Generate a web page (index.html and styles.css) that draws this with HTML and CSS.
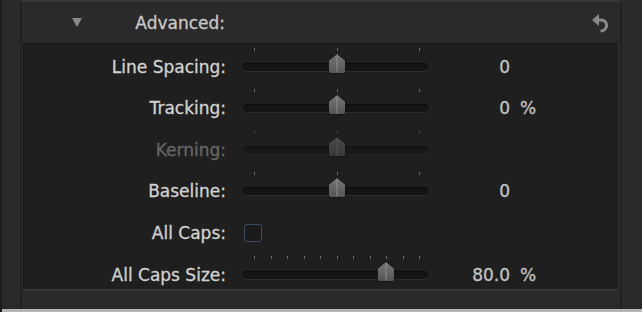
FILE: index.html
```html
<!DOCTYPE html>
<html lang="en">
<head>
    <meta charset="UTF-8">
    <title>Advanced</title>
    <link rel="stylesheet" href="styles.css">
</head>
<body>
    <svg class="defs" width="0" height="0">
        <defs>
            <linearGradient id="thumb-fill" x1="0" y1="0" x2="0" y2="1">
                <stop offset="0" stop-color="#777"/>
                <stop offset="1" stop-color="#545454"/>
            </linearGradient>
            <linearGradient id="thumb-off" x1="0" y1="0" x2="0" y2="1">
                <stop offset="0" stop-color="#4a4a4a"/>
                <stop offset="1" stop-color="#383838"/>
            </linearGradient>
            <symbol id="thumb" viewBox="0 0 18 21">
                <path d="M9 0.5 L17.5 7.5 V18.5 Q17.5 20.5 15.5 20.5 H2.5 Q0.5 20.5 0.5 18.5 V7.5 Z" fill="var(--fill)" stroke="#151515"/>
                <line x1="9" y1="2.5" x2="9" y2="19.5" stroke="var(--mid)" stroke-width="1"/>
            </symbol>
        </defs>
    </svg>

    <div class="panel">
        <div class="header">
            <div class="head-title">
                <span class="disclosure"></span>
                <span>Advanced:</span>
            </div>
            <svg class="reset" width="16" height="19" viewBox="0 0 16 19">
                <polygon points="0,6 7,0 7,12" fill="#8a8a8a"/>
                <path d="M6 6 H9 C12.5 6 14.5 8.5 14.5 11.5 C14.5 14.8 12 17 8.5 17" fill="none" stroke="#8a8a8a" stroke-width="3"/>
            </svg>
        </div>

        <div class="params">
            <div class="row">
                <label>Line Spacing:</label>
                <div class="slider">
                    <div class="ticks"><i></i><i></i><i></i></div>
                    <div class="track"></div>
                    <svg class="thumb" style="--pos:0.5"><use href="#thumb"/></svg>
                </div>
                <span class="value">0</span>
                <span class="unit"></span>
            </div>

            <div class="row">
                <label>Tracking:</label>
                <div class="slider">
                    <div class="ticks"><i></i><i></i><i></i></div>
                    <div class="track"></div>
                    <svg class="thumb" style="--pos:0.5"><use href="#thumb"/></svg>
                </div>
                <span class="value">0</span>
                <span class="unit">%</span>
            </div>

            <div class="row disabled">
                <label>Kerning:</label>
                <div class="slider">
                    <div class="ticks"><i></i><i></i><i></i></div>
                    <div class="track"></div>
                    <svg class="thumb" style="--pos:0.5"><use href="#thumb"/></svg>
                </div>
                <span class="value"></span>
                <span class="unit"></span>
            </div>

            <div class="row">
                <label>Baseline:</label>
                <div class="slider">
                    <div class="ticks"><i></i><i></i><i></i></div>
                    <div class="track"></div>
                    <svg class="thumb" style="--pos:0.5"><use href="#thumb"/></svg>
                </div>
                <span class="value">0</span>
                <span class="unit"></span>
            </div>

            <div class="row">
                <label>All Caps:</label>
                <div class="check-cell"><span class="checkbox"></span></div>
                <span class="value"></span>
                <span class="unit"></span>
            </div>

            <div class="row">
                <label>All Caps Size:</label>
                <div class="slider">
                    <div class="ticks"><i></i><i></i><i></i><i></i><i></i><i></i><i></i><i></i><i></i><i></i><i></i></div>
                    <div class="track"></div>
                    <svg class="thumb" style="--pos:0.8"><use href="#thumb"/></svg>
                </div>
                <span class="value">80.0</span>
                <span class="unit">%</span>
            </div>
        </div>
    </div>
    <div class="bottom-edge"></div>
</body>
</html>
```

FILE: styles.css
```css
body {
    margin: 0;
    height: 312px;
    overflow: hidden;
    background: #2a2a2a;
    border-left: 2px solid #1c1c1c;
    font-family: "DejaVu Sans", sans-serif;
    font-size: 17px;
    color: #d2d2d2;
    -webkit-text-stroke: 0.3px currentColor;
    display: flex;
    flex-direction: column;
}
.defs {
    position: absolute;
}
.panel {
    margin-left: 18px;
    width: 598px;
    height: 309px;
    border-left: 2px solid #222;
    border-right: 2px solid #222;
    border-top: 2px solid #353535;
    box-sizing: content-box;
    background: #2a2a2a;
}
.header {
    height: 41px;
    display: flex;
    align-items: center;
    padding-right: 12px;
}
.head-title {
    width: 153px;
    padding-left: 50px;
    display: flex;
    align-items: center;
    justify-content: space-between;
    color: #c8c8c8;
}
.disclosure {
    width: 0;
    height: 0;
    border-left: 5px solid transparent;
    border-right: 5px solid transparent;
    border-top: 9px solid #8a8a8a;
}
.reset {
    margin-left: auto;
    margin-top: 1px;
}
.params {
    margin-left: 1px;
    background: #1f1f1f;
    border-top: 1px solid #171717;
    border-left: 1px solid #161616;
    border-right: 1px solid #303030;
    border-bottom: 2px solid #383838;
    border-radius: 0 0 4px 4px;
    padding-top: 8.7px;
    display: flex;
    flex-direction: column;
    gap: 13.6px;
    width: 594px;
}
.row {
    height: 28px;
    display: grid;
    grid-template-columns: 219px 185px 82px auto;
    align-items: center;
}
.row label {
    text-align: right;
    padding-right: 17px;
}
.slider {
    position: relative;
    height: 28px;
}
.track {
    position: absolute;
    left: 0;
    right: 0;
    top: 10px;
    height: 8px;
    border-radius: 4px;
    background: #151515;
    box-shadow: inset 0 1px 1px #0b0b0b, 0 1px 0 #2b2b2b;
}
.ticks {
    position: absolute;
    left: 11px;
    width: 166px;
    top: -5px;
    height: 3px;
    display: flex;
    justify-content: space-between;
}
.ticks i {
    width: 1px;
    height: 3px;
    background: #6a6a6a;
}
.thumb {
    --fill: url(#thumb-fill);
    --mid: #8e8e8e;
    position: absolute;
    top: 0;
    left: calc(2px + var(--pos) * 165px);
    width: 18px;
    height: 21px;
}
.value {
    text-align: right;
    color: #c4c4c4;
}
.unit {
    padding-left: 10px;
    color: #c4c4c4;
}
.check-cell {
    display: flex;
    align-items: center;
    padding-left: 1px;
}
.checkbox {
    width: 16px;
    height: 16px;
    border: 1px solid #3c4a62;
    border-radius: 3px;
    background: #1b1b1b;
}
.disabled label {
    color: #666;
}
.disabled .ticks i {
    background: #454545;
}
.disabled .track {
    background: #181818;
    box-shadow: inset 0 1px 1px #111, 0 1px 0 #242424;
}
.disabled .thumb {
    --fill: url(#thumb-off);
    --mid: #555;
}
.bottom-edge {
    height: 3px;
    margin-left: -2px;
    background: #b5b5b5;
}
```
